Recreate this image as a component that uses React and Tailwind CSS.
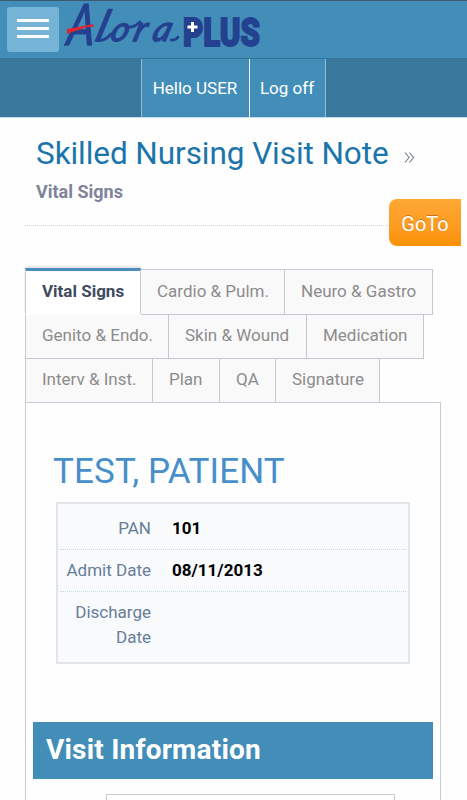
import clsx from "clsx";

const tabRows = [
  [
    { label: "Vital Signs", width: "w-[116px]", active: true },
    { label: "Cardio & Pulm.", width: "w-[144px]" },
    { label: "Neuro & Gastro", width: "w-[148px]" },
  ],
  [
    { label: "Genito & Endo.", width: "w-[144px]" },
    { label: "Skin & Wound", width: "w-[138px]" },
    { label: "Medication", width: "w-[117px]" },
  ],
  [
    { label: "Interv & Inst.", width: "w-[128px]" },
    { label: "Plan", width: "w-[67px]" },
    { label: "QA", width: "w-[56px]" },
    { label: "Signature", width: "w-[104px]" },
  ],
];

const patient = [
  { label: "PAN", value: "101" },
  { label: "Admit Date", value: "08/11/2013" },
  { label: "Discharge Date", value: "" },
];

function Logo() {
  return (
    <svg width="200" height="56" viewBox="63 0 200 56" className="block overflow-visible">
      {/* Alora */}
      <g
        fill="#24418f"
        stroke="#24418f"
        strokeWidth="1.4"
        fontFamily="Lato, sans-serif"
        fontStyle="italic"
      >
        <text fontSize="57" transform="translate(66 45) skewX(-6) scale(0.76 1)">
          A
        </text>
        <text transform="translate(94 41) skewX(-16)">
          <tspan x="0" fontSize="43">l</tspan>
          <tspan x="15" fontSize="34">o</tspan>
          <tspan x="38" fontSize="35">r</tspan>
          <tspan x="57" fontSize="35">a</tspan>
        </text>
      </g>
      {/* brush joins between the letters */}
      <path
        d="M97 40Q104 42 111 34M127 27Q134 28 140 22M171 40Q175 41 178 37"
        fill="none"
        stroke="#24418f"
        strokeWidth="2.800"
        strokeLinecap="round"
      />
      <path d="M67 29Q79 27 93 24L94 27Q87 26 82 29Q74 31 67 34Z" fill="#e3262e" />
      {/* PLUS */}
      <text
        x="183"
        y="46"
        fontSize="38"
        fontFamily="Roboto, sans-serif"
        fontWeight="900"
        fill="#24418f"
        stroke="#24418f"
        strokeWidth="1.8"
        textLength="77"
        lengthAdjust="spacingAndGlyphs"
      >
        PLUS
      </text>
      <path d="M187 21h11v12h-11z" fill="#24418f" />
      <path d="M192.500 22v10M187.500 27h10" stroke="#fff" strokeWidth="3" />
    </svg>
  );
}

function Header() {
  return (
    <header>
      <div className="flex h-[59px] border-t border-b border-t-[#3b5a6e] border-b-[#34749a] bg-[#438eb9] pl-[7px]">
        <button className="mt-[6px] flex h-[45px] w-[52px] flex-col items-center justify-center gap-[5px] rounded-[3px] bg-[#75b3d7] pb-[2px]">
          <span className="h-[3px] w-8 bg-white" />
          <span className="h-[3px] w-8 bg-white" />
          <span className="h-[3px] w-8 bg-white" />
        </button>
        <div className="-mt-px ml-1">
          <Logo />
        </div>
      </div>
      <nav className="flex h-[59px] justify-center border-b border-[#c5dbe8] bg-[#39779c] pt-px pr-px text-[17px] text-white">
        <a className="-mt-px flex w-[109px] items-center justify-center border-r border-l border-l-[#8fbcd6] border-r-white bg-[#438eb9] pt-[2px]">
          Hello USER
        </a>
        <a className="-mt-px flex w-[76px] items-center justify-center border-r border-[#8fbcd6] bg-[#438eb9] pt-[2px]">
          Log off
        </a>
      </nav>
    </header>
  );
}

function Tab({ label, width, active, first, top }) {
  return (
    <li
      className={clsx(
        "shrink-0 border-r border-[#c3c9d3] pl-4 text-[17px] whitespace-nowrap",
        width,
        first && "border-l",
        active
          ? "-mt-px h-[46px] border-t-[3px] border-t-[#4c8fbd] bg-white leading-[41px] font-bold text-[#3f4b5f] shadow-[0_-2px_2px_rgba(0,0,0,0.1)]"
          : "border-b bg-[#f9f9f9] text-[#8c8c8c]",
        top && !active && "h-[46px] border-t leading-[43px]",
        !top && "h-11 leading-[41px]",
      )}
    >
      {label}
    </li>
  );
}

export default function App() {
  return (
    <div className="h-[800px] w-[467px] overflow-hidden bg-[#fefefe] font-['Roboto',sans-serif]">
      <Header />

      <div className="relative ml-[25px] h-[108px] w-[415px] border-b border-dotted border-[#d5d5d5] pl-[11px]">
        <div className="flex items-baseline pt-[12px]">
          <h1 className="w-[368px] text-[31.5px] leading-[47px] tracking-[-0.07px] whitespace-nowrap text-[#1b75ab]">
            Skilled Nursing Visit Note
          </h1>
          <svg
            width="11"
            height="11"
            viewBox="0 0 11 11"
            fill="none"
            stroke="#7b8190"
            className="-translate-y-px"
          >
            <path d="M1 .5l4 5-4 5M5.500 .5l4 5-4 5" strokeWidth="1.200" />
          </svg>
        </div>
        <h2 className="text-[18px] leading-[30px] font-bold text-[#7f8499]">Vital Signs</h2>
        <button className="absolute top-[81px] left-[364px] h-[47px] w-[72px] rounded-l-[8px] bg-linear-to-b from-[#ffa834] to-[#fb9204] pt-[3px] text-[20px] text-white [text-shadow:0_-1px_0_rgba(0,0,0,0.25)]">
          GoTo
        </button>
      </div>

      <div className="mt-[43px] ml-[25px]">
        {tabRows.map((row, rowIndex) => (
          <ul key={rowIndex} className={clsx("flex", rowIndex === 0 ? "h-[46px]" : "h-11")}>
            {row.map((tab, i) => (
              <Tab key={tab.label} {...tab} first={i === 0} top={rowIndex === 0} />
            ))}
          </ul>
        ))}
      </div>

      <main className="-mt-px ml-[25px] h-[400px] w-[416px] border border-[#c5ccd6] px-[7px]">
        <h3 className="mt-[48px] ml-5 text-[35px] leading-[42px] tracking-[0.12px] text-[#478fca]">
          TEST, PATIENT
        </h3>

        {/* Patient summary */}
        <div className="mt-[9px] ml-[23px] h-[162px] w-[354px] border-2 border-[#e1e4e8] bg-[#f9fafc] px-[2px] pt-[4px]">
          {patient.map(({ label, value }) => (
            <div
              key={label}
              className="flex min-h-[42px] border-b border-dotted border-[#c5d9e3] pt-[8px] text-[17px] leading-[25px] last:border-b-0"
            >
              <div className="w-[91px] shrink-0 text-right text-[#667e99]">{label}</div>
              <div className="ml-[21px] font-bold text-black">{value}</div>
            </div>
          ))}
        </div>

        <h3 className="mt-[58px] h-[57px] w-[400px] bg-[#438eb9] pl-[13px] text-[28px] leading-[55px] font-bold tracking-[0.2px] text-white">
          Visit Information
        </h3>
        <div className="mt-[15px] ml-[73px] h-10 w-[289px] border border-[#c9c9c9]" />
      </main>
    </div>
  );
}
